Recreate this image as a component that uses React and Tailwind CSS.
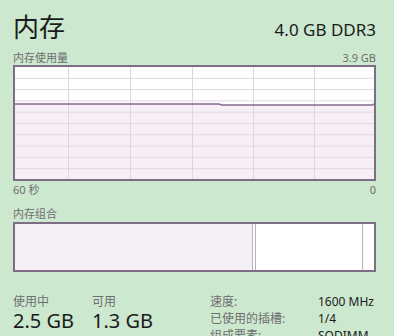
import React from "react";

const font = { fontFamily: '"Noto Sans", "Noto Sans CJK SC", sans-serif' };

function UsageChart() {
  const w = 359;
  const h = 112;
  const vlines = [53, 115, 177, 238, 299];
  const hlines = [1, 2, 3, 4, 5, 6, 7, 8, 9].map((i) => i * 11.3);
  return (
    <svg width={w} height={h} className="block">
      <rect x="0" y="0" width={w} height={h} fill="#ffffff" />
      <path d={`M0 37 L204 37 L207 38 L${w - 2} 38 L${w} 37 L${w} ${h} L0 ${h} Z`} fill="#f7eff5" />
      {hlines.map((y) => (
        <line key={y} x1="0" x2={w} y1={y} y2={y} stroke="#e0d9e2" strokeWidth="1" />
      ))}
      {vlines.map((x) => (
        <line key={x} x1={x + 0.5} x2={x + 0.5} y1="0" y2={h} stroke="#ddd5e0" strokeWidth="1" />
      ))}
      <path d={`M0 37 L204 37 L207 38 L${w - 2} 38 L${w} 37`} fill="none" stroke="#876a8e" strokeWidth="1.6" />
    </svg>
  );
}

export default function App() {
  return (
    <div className="w-[394px] h-[336px] overflow-hidden bg-[#cce8cf] px-[13px] pr-[18px]" style={font}>
      <div className="flex items-end justify-between pt-[11px]">
        <div className="text-[26px] leading-[32px] text-[#1b1b1b]">内存</div>
        <div className="text-[17px] leading-[22px] text-[#1b1b1b] mb-[2px]">4.0 GB DDR3</div>
      </div>
      <div className="flex justify-between text-[11px] leading-[14px] text-[#6e6e6e] mt-[8px]">
        <span>内存使用量</span>
        <span>3.9 GB</span>
      </div>
      <div className="border-2 border-[#7e6d86] w-[363px] h-[116px]">
        <UsageChart />
      </div>
      <div className="flex justify-between text-[11px] leading-[14px] text-[#6e6e6e] mt-[2px]">
        <span>60 秒</span>
        <span>0</span>
      </div>
      <div className="text-[11px] leading-[14px] text-[#6e6e6e] mt-[10px]">内存组合</div>
      <div className="mt-[1px] border-2 border-[#7e6d86] w-[363px] h-[50px] flex bg-white">
        <div className="w-[238px] bg-[#f4f0f6] border-r border-[#c0b0c6]" />
        <div className="w-[2px]" />
        <div className="w-[108px] border-l border-r border-[#c0b0c6] bg-white" />
        <div className="flex-1 bg-white" />
      </div>
      <div className="flex mt-[22px]">
        <div className="w-[79px] flex flex-col gap-[1px]">
          <div className="text-[12px] leading-[15px] text-[#6e6e6e]">使用中</div>
          <div className="text-[20px] leading-[22px] text-[#1b1b1b]">2.5 GB</div>
        </div>
        <div className="w-[118px] flex flex-col gap-[1px]">
          <div className="text-[12px] leading-[15px] text-[#6e6e6e]">可用</div>
          <div className="text-[20px] leading-[22px] text-[#1b1b1b]">1.3 GB</div>
        </div>
        <div className="text-[12px] leading-[17px] -mt-[1px]">
          <div className="flex"><span className="w-[108px] text-[#6e6e6e]">速度:</span><span className="text-[#1b1b1b]">1600 MHz</span></div>
          <div className="flex"><span className="w-[108px] text-[#6e6e6e]">已使用的插槽:</span><span className="text-[#1b1b1b]">1/4</span></div>
          <div className="flex"><span className="w-[108px] text-[#6e6e6e]">组成要素:</span><span className="text-[#1b1b1b]">SODIMM</span></div>
        </div>
      </div>
    </div>
  );
}
